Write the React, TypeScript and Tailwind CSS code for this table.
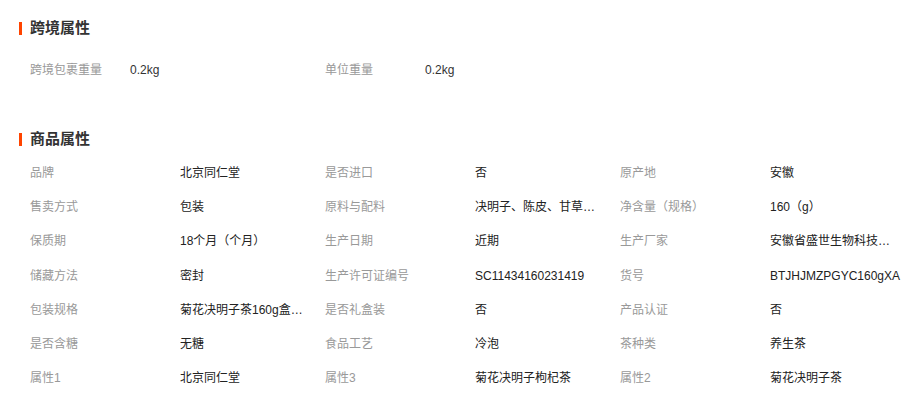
type Attr = { label: string; value: string; full?: boolean };

const crossBorder: Attr[] = [
  { label: "跨境包裹重量", value: "0.2kg" },
  { label: "单位重量", value: "0.2kg" },
];

const goods: Attr[] = [
  { label: "品牌", value: "北京同仁堂" },
  { label: "是否进口", value: "否" },
  { label: "原产地", value: "安徽" },
  { label: "售卖方式", value: "包装" },
  { label: "原料与配料", value: "决明子、陈皮、甘草、菊花" },
  { label: "净含量（规格）", value: "160（g）" },
  { label: "保质期", value: "18个月（个月）" },
  { label: "生产日期", value: "近期" },
  { label: "生产厂家", value: "安徽省盛世生物科技有限公司" },
  { label: "储藏方法", value: "密封" },
  { label: "生产许可证编号", value: "SC11434160231419" },
  { label: "货号", value: "BTJHJMZPGYC160gXA", full: true },
  { label: "包装规格", value: "菊花决明子茶160g盒装（袋泡茶）" },
  { label: "是否礼盒装", value: "否" },
  { label: "产品认证", value: "否" },
  { label: "是否含糖", value: "无糖" },
  { label: "食品工艺", value: "冷泡" },
  { label: "茶种类", value: "养生茶" },
  { label: "属性1", value: "北京同仁堂" },
  { label: "属性3", value: "菊花决明子枸杞茶" },
  { label: "属性2", value: "菊花决明子茶" },
];

const SectionTitle = ({ children }: { children: React.ReactNode }) => (
  <h3 className="flex items-center h-[20px]">
    <span className="w-[3px] h-[13px] bg-[#ff4400] mr-[8px]" />
    <span className="text-[15px] font-bold text-[#333]">{children}</span>
  </h3>
);

export default function App() {
  return (
    <div className="w-[916px] h-[396px] bg-white px-[19px] pt-[18px] font-['Liberation_Sans','Noto_Sans_CJK_SC',sans-serif] text-[12px] overflow-hidden">
      <SectionTitle>跨境属性</SectionTitle>
      <div className="grid grid-cols-[100px_195px_100px_195px] pl-[11px] mt-[15px]">
        {crossBorder.map((a) => (
          <div key={a.label} className="contents">
            <div className="h-[34px] leading-[34px] text-[#999]">{a.label}</div>
            <div className="h-[34px] leading-[34px] text-[#333]">{a.value}</div>
          </div>
        ))}
      </div>

      <div className="mt-[42px]">
        <SectionTitle>商品属性</SectionTitle>
      </div>
      <div className="grid grid-cols-[150px_145px_150px_145px_150px_145px] pl-[11px] mt-[7px]">
        {goods.map((a) => (
          <div key={a.label} className="contents">
            <div className="h-[34.2px] leading-[34.2px] text-[#999] whitespace-nowrap">{a.label}</div>
            <div
              className={
                a.full
                  ? "h-[34.2px] leading-[34.2px] text-[#222] whitespace-nowrap"
                  : "h-[34.2px] leading-[34.2px] text-[#222] whitespace-nowrap max-w-[126px] truncate"
              }
            >
              {a.value}
            </div>
          </div>
        ))}
      </div>
    </div>
  );
}
